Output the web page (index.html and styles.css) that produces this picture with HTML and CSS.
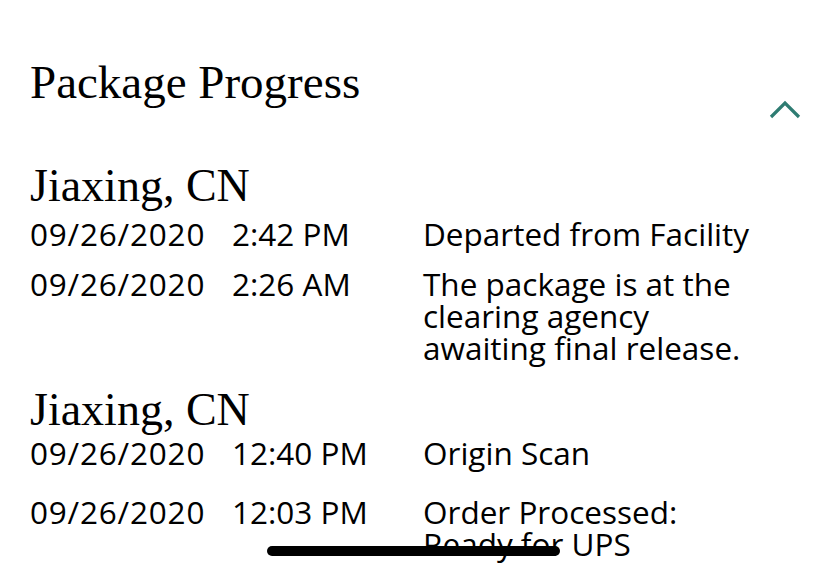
FILE: index.html
```html
<!DOCTYPE html>
<html lang="en">
<head>
  <meta charset="UTF-8" />
  <meta name="viewport" content="width=device-width, initial-scale=1.0"/>
  <title>Package Progress</title>
  <link rel="stylesheet" href="styles.css">
</head>
<body>

  <div class="header">
    <h2>Package Progress</h2>
    <svg class="chevron" width="34" height="20" viewBox="0 0 34 20">
      <polyline points="3,17 17,3 31,17" fill="none" stroke="#2e7c72" stroke-width="3.2"/>
    </svg>
  </div>

  <h3 class="city first">Jiaxing, CN</h3>
  <div class="row">
    <span class="date">09/26/2020</span>
    <span>2:42 PM</span>
    <span>Departed from Facility</span>
  </div>
  <div class="row">
    <span class="date">09/26/2020</span>
    <span>2:26 AM</span>
    <span>The package is at the clearing agency awaiting final release.</span>
  </div>

  <h3 class="city">Jiaxing, CN</h3>
  <div class="row tight">
    <span class="date">09/26/2020</span>
    <span>12:40 PM</span>
    <span>Origin Scan</span>
  </div>
  <div class="row spaced">
    <span class="date">09/26/2020</span>
    <span>12:03 PM</span>
    <span>Order Processed: Ready for UPS</span>
  </div>

  <div class="home-bar"></div>

</body>
</html>
```

FILE: styles.css
```css
body {
  margin: 0;
  padding: 0 28px 0 30px;
  background-color: #fff;
  color: #000;
  font-family: "Open Sans", sans-serif;
  overflow: hidden;
  height: 573px;
}

.header {
  display: flex;
  justify-content: space-between;
  align-items: flex-start;
  padding-top: 55px;
}

.header h2 {
  margin: 0;
  font-family: "Liberation Serif", serif;
  font-weight: normal;
  font-size: 47px;
  line-height: 55px;
}

.chevron {
  margin-top: 45px;
  margin-right: -2px;
}

.city {
  margin: 14px 0 0;
  font-family: "Liberation Serif", serif;
  font-weight: normal;
  font-size: 46px;
  line-height: 46px;
}

.city.first {
  margin-top: 43px;
}

.row {
  display: grid;
  grid-template-columns: 202px 191px 345px;
  padding: 9px 0;
  font-size: 31.5px;
  line-height: 32px;
}

.row .date {
  letter-spacing: 0.8px;
}

.row.tight {
  padding-top: 4px;
}

.row.spaced {
  margin-top: 9px;
}

.home-bar {
  position: fixed;
  left: 267px;
  bottom: 17px;
  width: 293px;
  height: 10px;
  border-radius: 5px;
  background-color: #000;
}
```
